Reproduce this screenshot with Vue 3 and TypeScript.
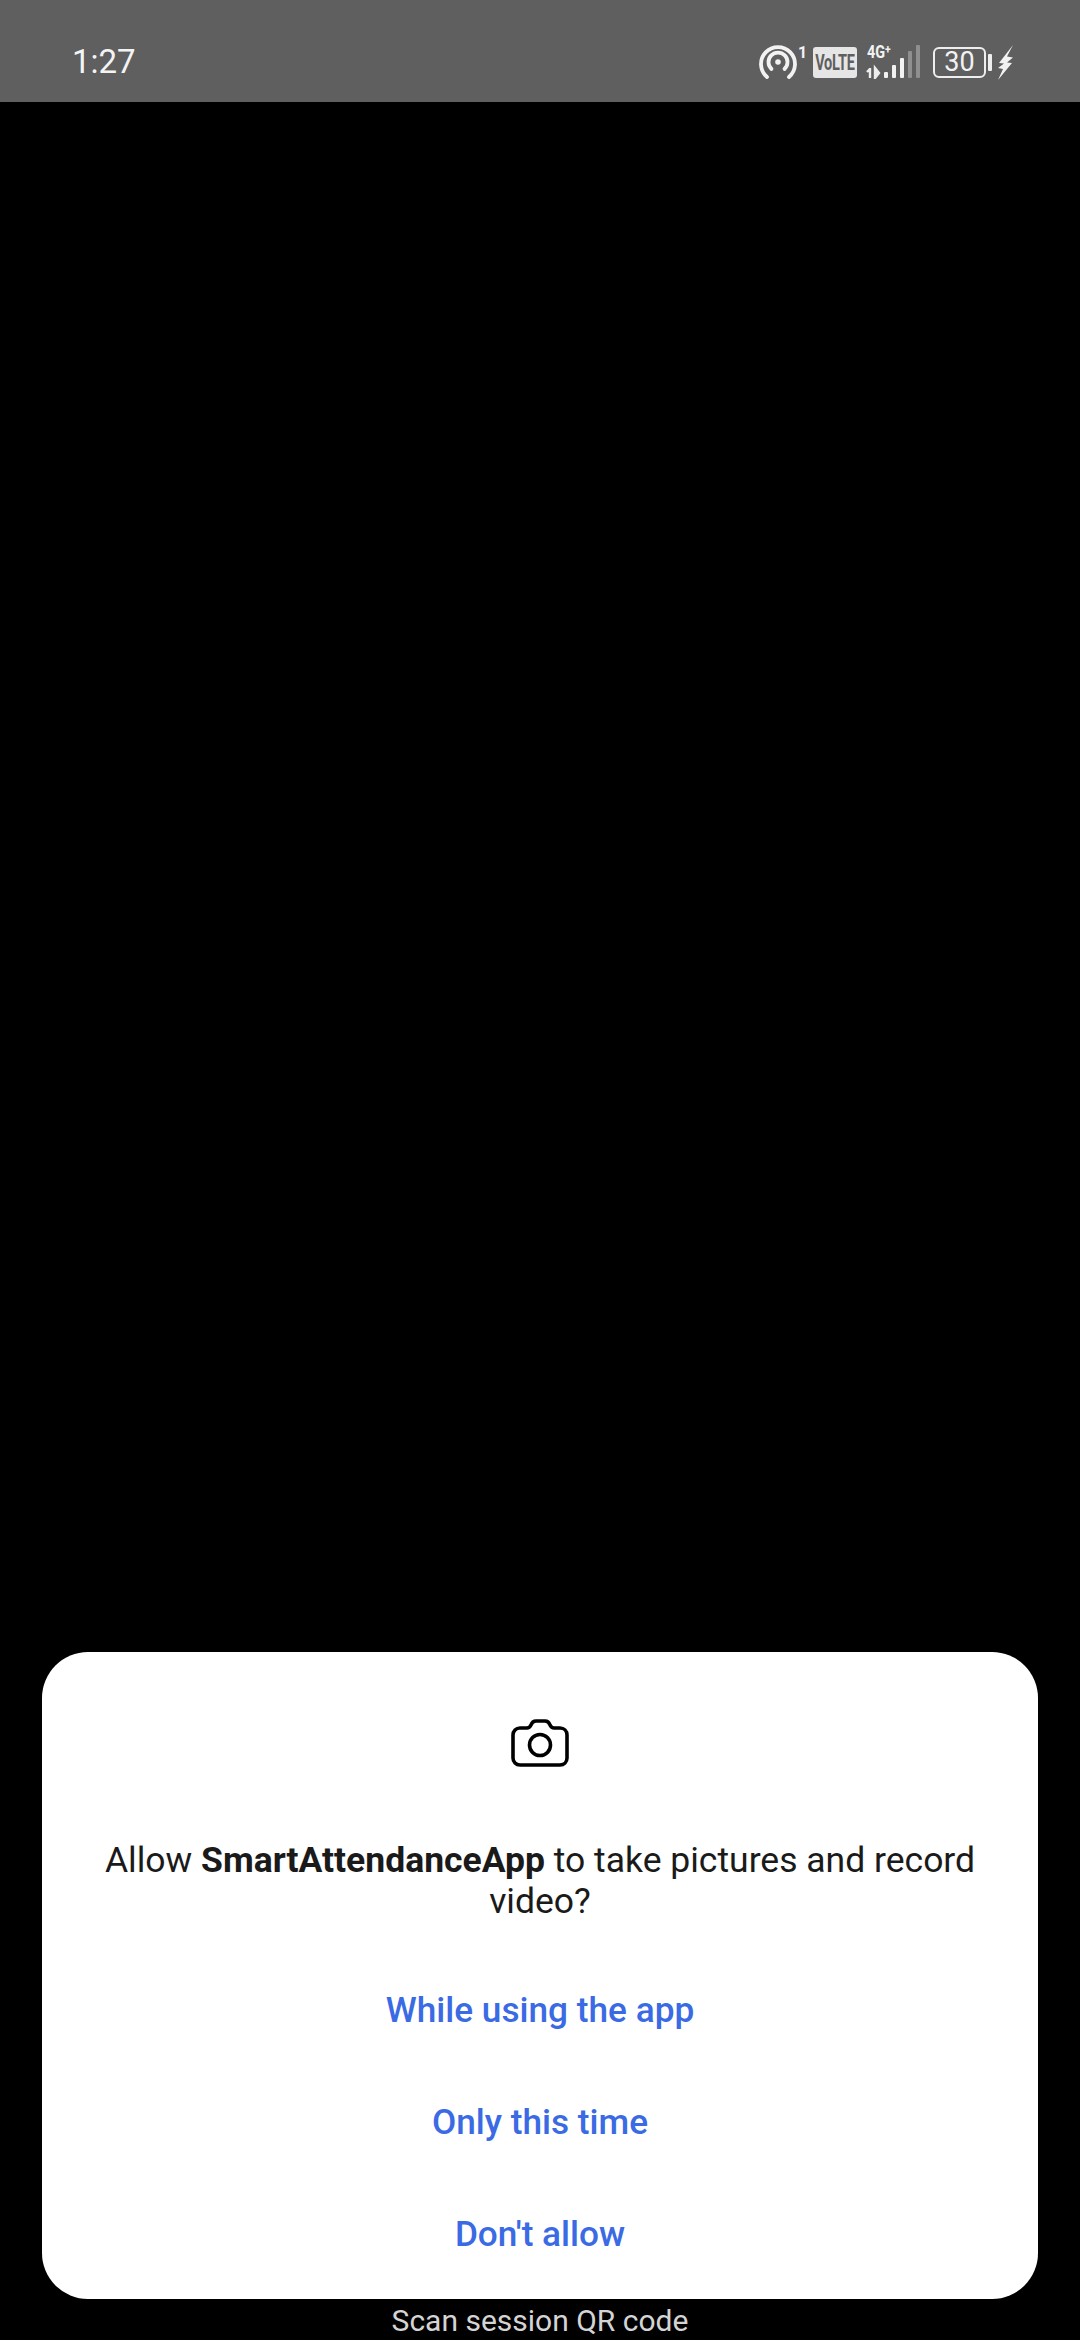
<template>
  <div class="screen">
    <header class="status-bar">
      <span class="clock">1:27</span>
      <div class="status-icons">
        <div class="hotspot">
          <svg width="38" height="34" viewBox="0 0 38 34" fill="none" stroke="#f2f2f2" stroke-width="3.8">
            <path d="M8 32 A17 17 0 1 1 30 32" stroke-linecap="round" />
            <path d="M12.5 24 A9.5 9.5 0 1 1 25.5 24" stroke-linecap="round" />
            <circle cx="19" cy="17" r="2.8" fill="#f2f2f2" stroke="none" />
          </svg>
          <span class="hotspot-sim">1</span>
        </div>
        <div class="volte"><span>VoLTE</span></div>
        <div class="network">
          <span class="network-type">4G<sup>+</sup></span>
          <svg class="signal" width="58" height="34" viewBox="0 0 58 34">
            <path d="M4 24 L1 27 M4 23 V33 M9 23 V33 L13 28 Z" stroke="#eee" stroke-width="2.4" fill="#eee" />
            <rect x="18" y="27" width="4" height="6" rx="1" fill="#f2f2f2" />
            <rect x="26" y="20" width="4" height="13" rx="1" fill="#f2f2f2" />
            <rect x="34" y="13" width="4" height="20" rx="1" fill="#f2f2f2" />
            <rect x="42" y="6" width="4" height="27" rx="1" fill="#8f8f8f" />
            <rect x="50" y="0" width="4" height="33" rx="1" fill="#8f8f8f" />
          </svg>
        </div>
        <div class="battery">
          <span class="battery-body">30</span>
          <span class="battery-cap"></span>
        </div>
        <svg width="15" height="35" viewBox="0 0 15 35" class="bolt">
          <path d="M15 0 L1 18 L6 18.5 L0 23 L5 24 L0 35 L14 18 L9 17.5 L15 12.5 L9 11.5 Z" fill="#f2f2f2" />
        </svg>
      </div>
    </header>

    <main class="viewfinder">
      <section class="dialog">
        <svg class="camera" width="58" height="48" viewBox="0 0 58 48" fill="none" stroke="#000" stroke-width="3.6" stroke-linejoin="round">
          <path d="M9 9 H16 C18 9 19 8 20 6 C21 3 23 2 25 2 H34 C36 2 38 3 39 6 C40 8 41 9 43 9 H49 C53 9 56 12 56 16 V39 C56 43 53 46 49 46 H9 C5 46 2 43 2 39 V16 C2 12 5 9 9 9 Z" />
          <circle cx="29" cy="26" r="10.5" />
        </svg>
        <p class="message">Allow <b>SmartAttendanceApp</b> to take pictures and record video?</p>
        <div class="actions">
          <button v-for="label in actions" :key="label" class="action">{{ label }}</button>
        </div>
      </section>
    </main>

    <footer class="caption">Scan session QR code</footer>
  </div>
</template>

<script setup lang="ts">
const actions: string[] = ["While using the app", "Only this time", "Don't allow"];
</script>

<style scoped>
.screen {
  width: 1080px;
  height: 2340px;
  display: flex;
  flex-direction: column;
  background: #000;
  font-family: Roboto, "Liberation Sans", sans-serif;
  overflow: hidden;
}

.status-bar {
  height: 102px;
  flex: none;
  background: #5f5f5f;
  display: flex;
  align-items: center;
  justify-content: space-between;
  padding: 22px 67px 0 72px;
  box-sizing: border-box;
}

.clock {
  color: #f4f4f4;
  font-size: 33px;
  line-height: 40px;
}

.status-icons {
  display: flex;
  align-items: center;
  height: 36px;
  color: #f2f2f2;
}

.hotspot {
  display: flex;
  align-items: flex-start;
  width: 54px;
}

.hotspot-sim {
  font-size: 16px;
  line-height: 15px;
  font-weight: 700;
  margin-left: 1px;
}

.volte {
  width: 44px;
  height: 31px;
  background: #e6e6e6;
  color: #5f5f5f;
  border-radius: 3px;
  display: flex;
  align-items: center;
  justify-content: center;
  font-size: 22px;
  font-weight: 700;
  line-height: 31px;
}

.volte span {
  transform: scaleX(0.66);
  letter-spacing: -0.4px;
}

.network {
  width: 58px;
  height: 36px;
  position: relative;
  margin-left: 9px;
}

.network-type {
  position: absolute;
  left: 1px;
  top: 0;
  font-size: 18px;
  line-height: 16px;
  font-weight: 700;
  transform: scaleX(0.8);
  transform-origin: left center;
}

.network-type sup {
  font-size: 13px;
  line-height: 0;
  vertical-align: 4px;
}

.signal {
  position: absolute;
  left: 0;
  top: 1px;
}

.battery {
  display: flex;
  align-items: center;
  margin-left: 9px;
}

.battery-body {
  width: 53px;
  height: 31px;
  box-sizing: border-box;
  border: 2.5px solid #eeeeee;
  border-radius: 6px;
  font-size: 27px;
  line-height: 26px;
  text-align: center;
  color: #f2f2f2;
}

.battery-cap {
  width: 4px;
  height: 17px;
  background: #eeeeee;
  border-radius: 1px;
  margin-left: 2px;
}

.bolt {
  margin-left: 6px;
}

.viewfinder {
  flex: 1;
  display: flex;
  flex-direction: column;
  justify-content: flex-end;
  padding: 0 42px;
}

.dialog {
  height: 647px;
  box-sizing: border-box;
  background: #fff;
  border-radius: 46px;
  display: flex;
  flex-direction: column;
  align-items: center;
  padding-top: 67px;
}

.camera {
  flex: none;
}

.message {
  margin: 73px 0 0;
  width: 900px;
  color: #1a1a1a;
  font-size: 35.5px;
  line-height: 41px;
  text-align: center;
}

.message b {
  font-weight: 700;
}

.actions {
  margin-top: 32px;
  width: 100%;
  display: flex;
  flex-direction: column;
}

.action {
  height: 112px;
  border: 0;
  background: none;
  padding: 0;
  color: #3a6ae4;
  font-family: inherit;
  font-size: 35.2px;
  font-weight: 500;
}

.caption {
  height: 41px;
  flex: none;
  color: #d4d4d4;
  font-size: 30px;
  line-height: 43px;
  text-align: center;
}
</style>
